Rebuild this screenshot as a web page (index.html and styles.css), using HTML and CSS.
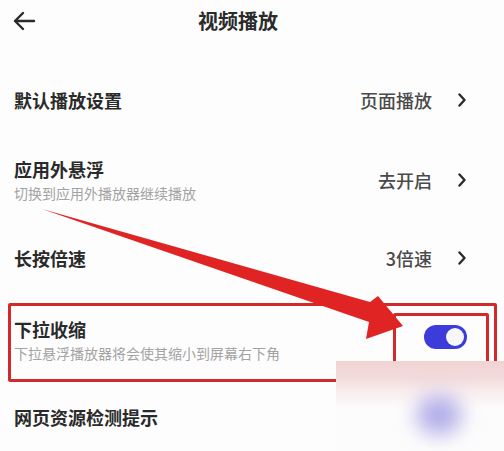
FILE: index.html
```html
<!DOCTYPE html>
<html lang="zh-CN">
<head>
  <meta charset="UTF-8">
  <meta name="viewport" content="width=device-width, initial-scale=1.0">
  <title>视频播放</title>
  <link rel="stylesheet" href="styles.css">
</head>
<body>
  <div class="page">
    <div class="header">
      <svg class="back" width="24" height="20" viewBox="0 0 24 20">
        <path d="M22 10 H3 M11 2 L3 10 L11 18" fill="none" stroke="#2b2b2b" stroke-width="2.4" stroke-linecap="round" stroke-linejoin="round"/>
      </svg>
      <h1>视频播放</h1>
    </div>

    <div class="row row-1">
      <div class="label">默认播放设置</div>
      <div class="value">页面播放</div>
      <svg class="chevron" width="8" height="14" viewBox="0 0 8 14"><path d="M1.5 1.5 L6.5 7 L1.5 12.5" fill="none" stroke="#2b2b2b" stroke-width="2.4" stroke-linecap="round" stroke-linejoin="round"/></svg>
    </div>

    <div class="row row-2">
      <div class="text">
        <div class="label">应用外悬浮</div>
        <div class="sub">切换到应用外播放器继续播放</div>
      </div>
      <div class="value">去开启</div>
      <svg class="chevron" width="8" height="14" viewBox="0 0 8 14"><path d="M1.5 1.5 L6.5 7 L1.5 12.5" fill="none" stroke="#2b2b2b" stroke-width="2.4" stroke-linecap="round" stroke-linejoin="round"/></svg>
    </div>

    <div class="row row-3">
      <div class="label">长按倍速</div>
      <div class="value">3倍速</div>
      <svg class="chevron" width="8" height="14" viewBox="0 0 8 14"><path d="M1.5 1.5 L6.5 7 L1.5 12.5" fill="none" stroke="#2b2b2b" stroke-width="2.4" stroke-linecap="round" stroke-linejoin="round"/></svg>
    </div>

    <div class="highlight">
      <div class="text">
        <div class="label">下拉收缩</div>
        <div class="sub">下拉悬浮播放器将会使其缩小到屏幕右下角</div>
      </div>
      <div class="switch-box">
        <div class="switch"><span class="knob"></span></div>
      </div>
    </div>

    <div class="row row-5">
      <div class="label">网页资源检测提示</div>
    </div>

    <!-- annotation arrow drawn over the list -->
    <svg class="arrow" width="504" height="451" viewBox="0 0 504 451">
      <polygon points="42,209 370,302 378,296 403,326 366,339 369,322" fill="#e02424"/>
    </svg>

    <div class="smudge"><span class="blob"></span></div>
  </div>
</body>
</html>
```

FILE: styles.css
```css
body {
  margin: 0;
  background: #fdfdfd;
  font-family: "Noto Sans CJK SC", "Noto Sans", sans-serif;
  color: #262626;
}

.page {
  position: relative;
  width: 504px;
  height: 451px;
  overflow: hidden;
}

.header {
  display: flex;
  align-items: center;
  height: 42px;
  padding-left: 12px;
}

.header h1 {
  margin: 0 0 0 162px;
  font-size: 20px;
  font-weight: 700;
  color: #2b2b2b;
  line-height: 24px;
}

.row {
  display: flex;
  align-items: center;
  padding: 0 38px 0 14px;
}

.row-1 {
  margin-top: 20px;
  height: 76px;
}

.row-2 {
  height: 84px;
}

.row-3 {
  height: 72px;
}

.row-5 {
  height: 70px;
}

.text {
  flex: 1;
  display: flex;
  flex-direction: column;
  gap: 3px;
}

.label {
  flex: 1;
  font-size: 18px;
  line-height: 22px;
  font-weight: 700;
  color: #2a2a2a;
}

.sub {
  font-size: 14px;
  line-height: 20px;
  color: #a3a3a3;
}

.value {
  font-size: 18px;
  line-height: 22px;
  font-weight: 500;
  color: #4a4a4a;
  margin-right: 26px;
}

.chevron {
  display: block;
}

.highlight {
  display: flex;
  align-items: flex-start;
  margin: 9px 7px 0 8px;
  height: 73px;
  border: 3px solid #d22a2a;
  border-radius: 2px;
  padding-left: 3px;
}

.highlight .text {
  padding-top: 12px;
}

.switch-box {
  width: 96px;
  height: 56px;
  margin: 7px 5px 0 0;
  border: 3px solid #d22a2a;
  border-radius: 2px;
  padding: 9px 0 0 28px;
  box-sizing: border-box;
}

.switch {
  width: 43px;
  height: 24px;
  border-radius: 12px;
  background: #3c3cda;
  position: relative;
}

.knob {
  position: absolute;
  top: 3px;
  right: 3px;
  width: 18px;
  height: 18px;
  border-radius: 50%;
  background: #f7f7f7;
}

.arrow {
  position: absolute;
  left: 0;
  top: 0;
}

.smudge {
  position: absolute;
  left: 336px;
  top: 361px;
  width: 168px;
  height: 90px;
  background: linear-gradient(180deg, #f1d3d3 0, #f3dcdc 18px, #f8eded 30px, #fdfcfc 48px);
}

.blob {
  position: absolute;
  left: 80px;
  top: 34px;
  width: 46px;
  height: 40px;
  border-radius: 50%;
  background: #b3aee8;
  filter: blur(10px);
}
```
